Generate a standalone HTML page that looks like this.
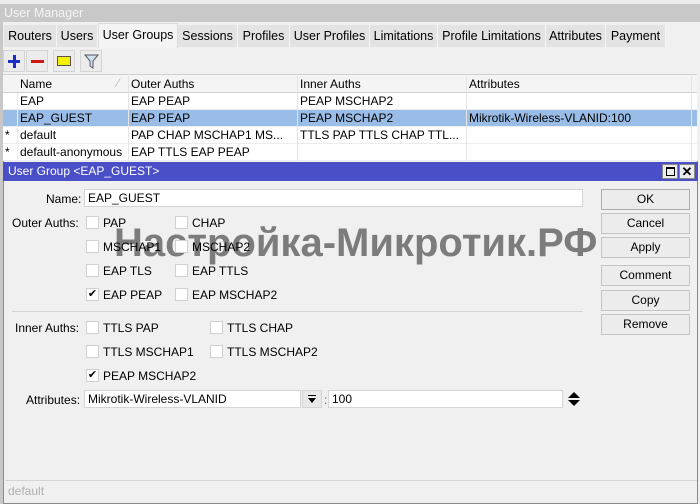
<!DOCTYPE html>
<html><head><meta charset="utf-8"><style>
*{box-sizing:border-box;margin:0;padding:0}
body{width:700px;height:504px;overflow:hidden;background:#f0f0f0;font-family:"Liberation Sans",sans-serif;font-size:12px;color:#000;position:relative}
.a{position:absolute;white-space:nowrap}
.tab{position:absolute;top:25px;height:22px;background:#e3e3e3;border-right:1px solid #f4f4f4;line-height:22px;text-align:center;font-size:12.5px}
.tb{position:absolute;top:50px;width:22px;height:22px;border:1px solid #d4d4d4;background:#ececec}
.row{position:absolute;left:3px;width:694px;height:17px;background:#fff;border-bottom:1px solid #ececec}
.row span{position:absolute;top:1px}
.cb{position:absolute;width:13px;height:13px;background:#fff;border:1px solid #d0d0d0}
.btn{position:absolute;left:601px;width:89px;height:21px;border:1px solid #adadad;background:#ececec;text-align:center;line-height:19px}
.inp{position:absolute;background:#fff;border:1px solid #d5d5d5;height:18px;padding-left:3px;line-height:16px}
</style></head><body>
<div class="a" style="left:0;top:0;width:700px;height:4px;background:#ececec"></div>
<div class="a" style="left:0;top:4px;width:700px;height:18px;background:#c8c8c8;color:#f4f4f4;padding-left:4px;line-height:18px;font-size:12.5px">User Manager</div>
<div class="a" style="left:0;top:22px;width:3px;height:482px;background:#c8c8c8"></div>
<div class="tab" style="left:4px;width:53px">Routers</div>
<div class="tab" style="left:57px;width:41px">Users</div>
<div class="tab" style="left:98px;width:80px;top:23px;height:25px;background:#f4f4f4;border:1px solid #dcdcdc;border-bottom:none">User Groups</div>
<div class="tab" style="left:178px;width:60px">Sessions</div>
<div class="tab" style="left:238px;width:52px">Profiles</div>
<div class="tab" style="left:290px;width:80px">User Profiles</div>
<div class="tab" style="left:370px;width:68px">Limitations</div>
<div class="tab" style="left:438px;width:108px">Profile Limitations</div>
<div class="tab" style="left:546px;width:60px">Attributes</div>
<div class="tab" style="left:606px;width:60px">Payment</div>
<div class="tb" style="left:3px"><div class="a" style="left:4px;top:9px;width:12px;height:3px;background:#1a2fc8"></div><div class="a" style="left:8.5px;top:4px;width:3px;height:13px;background:#1a2fc8"></div></div>
<div class="tb" style="left:26px"><div class="a" style="left:4px;top:9px;width:13px;height:3px;background:#d01818"></div></div>
<div class="tb" style="left:53px"><div class="a" style="left:3px;top:5px;width:14px;height:10px;background:#f6f000;border:1px solid #555"></div></div>
<div class="tb" style="left:80px"><svg class="a" style="left:3px;top:3px" width="15" height="15"><path d="M1 1h13l-5 6v7l-3-2V7z" fill="#cfe0ee" stroke="#556" stroke-width="1"/></svg></div>
<div class="a" style="left:3px;top:74px;width:694px;height:19px;background:#f4f4f4;border-top:1px solid #d0d0d0;border-bottom:1px solid #d0d0d0"></div>
<div class="a" style="left:20px;top:77px">Name</div><div class="a" style="left:117px;top:76px;color:#bbb">⁄</div>
<div class="a" style="left:131px;top:77px">Outer Auths</div>
<div class="a" style="left:300px;top:77px">Inner Auths</div>
<div class="a" style="left:469px;top:77px">Attributes</div>
<div class="row" style="top:93px"><span style="left:17px">EAP</span><span style="left:128px">EAP PEAP</span><span style="left:297px">PEAP MSCHAP2</span></div>
<div class="row" style="top:110px;background:#99bde6"><span style="left:17px">EAP_GUEST</span><span style="left:128px">EAP PEAP</span><span style="left:297px">PEAP MSCHAP2</span><span style="left:466px">Mikrotik-Wireless-VLANID:100</span></div>
<div class="row" style="top:127px"><span style="left:2px">*</span><span style="left:17px">default</span><span style="left:128px">PAP CHAP MSCHAP1 MS...</span><span style="left:297px">TTLS PAP TTLS CHAP TTL...</span></div>
<div class="row" style="top:144px"><span style="left:2px">*</span><span style="left:17px">default-anonymous</span><span style="left:128px">EAP TTLS EAP PEAP</span></div>
<div class="a" style="left:17px;top:93px;width:1px;height:68px;background:#ececec"></div>
<div class="a" style="left:128px;top:74px;width:1px;height:87px;background:#e4e4e4"></div>
<div class="a" style="left:297px;top:74px;width:1px;height:87px;background:#e4e4e4"></div>
<div class="a" style="left:466px;top:74px;width:1px;height:87px;background:#e4e4e4"></div>
<div class="a" style="left:691px;top:74px;width:1px;height:87px;background:#e4e4e4"></div>
<div class="a" style="left:3px;top:161px;width:695px;height:343px;border:1px solid #8a8a8a;border-top:none;background:#f0f0f0"></div>
<div class="a" style="left:3px;top:162px;width:695px;height:19px;background:#4a4fc8;color:#fff;padding-left:5px;line-height:19px">User Group &lt;EAP_GUEST&gt;</div>
<div class="a" style="left:662px;top:164px;width:16px;height:15px;background:#ececec;border:1px solid #888"><div class="a" style="left:3px;top:2px;width:9px;height:9px;border:1px solid #000;border-top-width:2px"></div></div>
<div class="a" style="left:679px;top:164px;width:16px;height:15px;background:#ececec;border:1px solid #888;text-align:center;line-height:13px;font-weight:bold;font-size:13px">✕</div>
<div class="a" style="left:46px;top:192px">Name:</div>
<div class="inp" style="left:84px;top:189px;width:499px">EAP_GUEST</div>
<div class="a" style="left:12px;top:216px">Outer Auths:</div>
<div class="a" style="left:114px;top:221px;font-size:40px;font-weight:bold;color:rgba(85,85,85,0.75);line-height:44px">Настройка-Микротик.РФ</div>
<div class="cb" style="left:86px;top:216px"></div><div class="a" style="left:103px;top:216px">PAP</div>
<div class="cb" style="left:175px;top:216px"></div><div class="a" style="left:192px;top:216px">CHAP</div>
<div class="cb" style="left:86px;top:240px"></div><div class="a" style="left:103px;top:240px">MSCHAP1</div>
<div class="cb" style="left:175px;top:240px"></div><div class="a" style="left:192px;top:240px">MSCHAP2</div>
<div class="cb" style="left:86px;top:264px"></div><div class="a" style="left:103px;top:264px">EAP TLS</div>
<div class="cb" style="left:175px;top:264px"></div><div class="a" style="left:192px;top:264px">EAP TTLS</div>
<div class="cb" style="left:86px;top:288px;font-size:11px;line-height:11px;text-align:center">✔</div><div class="a" style="left:103px;top:288px">EAP PEAP</div>
<div class="cb" style="left:175px;top:288px"></div><div class="a" style="left:192px;top:288px">EAP MSCHAP2</div>
<div class="a" style="left:12px;top:311px;width:571px;height:1px;background:#d4d4d4"></div>
<div class="a" style="left:15px;top:321px">Inner Auths:</div>
<div class="cb" style="left:86px;top:321px"></div><div class="a" style="left:103px;top:321px">TTLS PAP</div>
<div class="cb" style="left:210px;top:321px"></div><div class="a" style="left:227px;top:321px">TTLS CHAP</div>
<div class="cb" style="left:86px;top:345px"></div><div class="a" style="left:103px;top:345px">TTLS MSCHAP1</div>
<div class="cb" style="left:210px;top:345px"></div><div class="a" style="left:227px;top:345px">TTLS MSCHAP2</div>
<div class="cb" style="left:86px;top:369px;font-size:11px;line-height:11px;text-align:center">✔</div><div class="a" style="left:103px;top:369px">PEAP MSCHAP2</div>
<div class="a" style="left:26px;top:393px">Attributes:</div>
<div class="inp" style="left:84px;top:390px;width:217px">Mikrotik-Wireless-VLANID</div>
<div class="a" style="left:302px;top:390px;width:20px;height:18px;border:1px solid #d5d5d5;background:#e8e8e8"><div class="a" style="left:5px;top:4px;width:8px;height:1px;background:#000"></div><div class="a" style="left:5px;top:7px;width:0;height:0;border-left:4px solid transparent;border-right:4px solid transparent;border-top:5px solid #000"></div></div>
<div class="a" style="left:324px;top:393px;color:#666">:</div>
<div class="inp" style="left:328px;top:390px;width:235px">100</div>
<div class="a" style="left:568px;top:392px;width:0;height:0;border-left:6px solid transparent;border-right:6px solid transparent;border-bottom:6px solid #000"></div>
<div class="a" style="left:568px;top:400px;width:0;height:0;border-left:6px solid transparent;border-right:6px solid transparent;border-top:6px solid #000"></div>
<div class="btn" style="top:189px">OK</div>
<div class="btn" style="top:213px;border-color:#c4c4c4">Cancel</div>
<div class="btn" style="top:237px;border-color:#c4c4c4">Apply</div>
<div class="btn" style="top:265px;border-color:#c4c4c4">Comment</div>
<div class="btn" style="top:290px;border-color:#c4c4c4">Copy</div>
<div class="btn" style="top:314px;border-color:#c4c4c4">Remove</div>
<div class="a" style="left:5px;top:480px;width:692px;height:22px;border-top:1px solid #d4d4d4;color:#b0b0b0;padding-left:3px;line-height:21px">default</div>
</body></html>
